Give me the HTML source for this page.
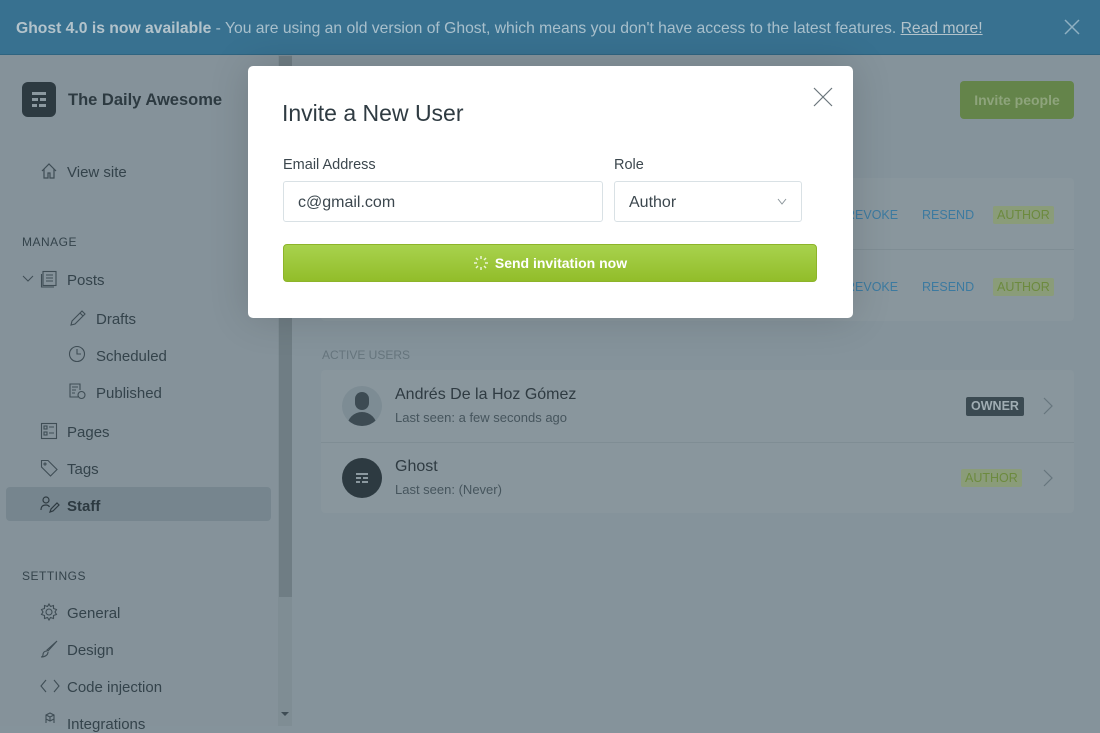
<!DOCTYPE html>
<html><head><meta charset="utf-8"><style>
*{box-sizing:border-box;margin:0;padding:0}
body{width:1100px;height:726px;overflow:hidden;font-family:"Liberation Sans",sans-serif;background:#85939b;position:relative;color:#2f3b42}
.banner{position:absolute;left:0;top:0;width:1100px;height:55px;background:#387190;color:#a9c0cc;font-size:15.7px;line-height:57px;padding-left:16px;border-bottom:1px solid #2f6480}
.banner b{color:#b3c3cb}
.banner u{color:#b3c3cb}
.bx{position:absolute;right:20px;top:19px}
.side{position:absolute;left:0;top:55px;width:278px;height:671px;background:#85929a}
.sb{position:absolute;left:278px;top:55px;width:14px;height:671px;background:#7f8d94}
.thumb{position:absolute;left:279px;top:56px;width:13px;height:541px;background:#6f7d84}
.logo{position:absolute;left:22px;top:82px;width:34px;height:35px;background:#2d3a41;border-radius:6px}
.logo i{position:absolute;height:3px;background:#8b989f}
.title{position:absolute;left:68px;top:91px;font-size:16.5px;font-weight:bold;color:#2d3a41}
.it{position:absolute;font-size:15px;color:#34434b;margin-top:1px}
.hd{position:absolute;left:22px;font-size:12px;letter-spacing:.5px;color:#34434b}
.ic{position:absolute}
.staff{position:absolute;left:6px;top:487px;width:265px;height:34px;background:#76858e;border-radius:4px}
.card{position:absolute;left:321px;width:753px;background:#89969d;border-radius:4px}
.blue{position:absolute;font-size:12.5px;color:#3c7aa0}
.tag{position:absolute;font-size:12.5px;color:#6c8a3e;background:#8a9c79;padding:2px 4px;border-radius:2px}
.modal{position:absolute;left:248px;top:66px;width:605px;height:252px;background:#fff;border-radius:5px;box-shadow:0 0 40px rgba(0,0,0,.15)}
.modal h1{position:absolute;left:34px;top:34px;font-size:23px;font-weight:normal;color:#2f3b42}
.lbl{position:absolute;top:91px;font-size:14.5px;color:#3c474e}
.inp{position:absolute;top:115px;height:41px;border:1px solid #d9e1e5;border-radius:3px;font-size:16px;color:#3c474e;line-height:41px;padding-left:14px}
.btn{position:absolute;left:35px;top:178px;width:534px;height:38px;border-radius:4px;background:linear-gradient(#a8d24d,#92bd2a);border:1px solid #8db42a;color:#fff;font-weight:bold;font-size:14px;line-height:36px;text-align:center}
</style></head><body>
<div class="banner"><b>Ghost 4.0 is now available</b> - You are using an old version of Ghost, which means you don't have access to the latest features. <u>Read more!</u>
<svg class="bx" width="16" height="16" viewBox="0 0 16 16"><path d="M1 1L15 15M15 1L1 15" stroke="#8fb0c2" stroke-width="1.5"/></svg></div>
<div class="side"></div><div class="sb"></div><div class="thumb"></div>
<div class="logo"><i style="left:10px;top:10px;width:14px"></i><i style="left:10px;top:16px;width:6px"></i><i style="left:18px;top:16px;width:6px"></i><i style="left:10px;top:22px;width:5px"></i><i style="left:17px;top:22px;width:7px"></i></div>
<div class="title">The Daily Awesome</div>
<svg class="ic" style="left:40px;top:162px" width="18" height="18" viewBox="0 0 18 18" fill="none" stroke="#3f4d55" stroke-width="1.2"><path d="M2 9L9 2L16 9M4 7V16H8V11H10V16H14V7"/></svg>
<div class="it" style="left:67px;top:163px">View site</div>
<div class="hd" style="top:235px">MANAGE</div>
<svg class="ic" style="left:22px;top:273px" width="12" height="12" viewBox="0 0 12 12"><path d="M1 3L6 8L11 3" stroke="#3f4d55" fill="none"/></svg>
<svg class="ic" style="left:40px;top:270px" width="18" height="18" viewBox="0 0 18 18" fill="none" stroke="#3f4d55" stroke-width="1.1"><rect x="3" y="1.5" width="13" height="14"/><path d="M1.5 4V17H14M6 5H13M6 8H13M6 11H13"/></svg>
<div class="it" style="left:67px;top:271px">Posts</div>
<svg class="ic" style="left:68px;top:309px" width="20" height="18" viewBox="0 0 20 18" fill="none" stroke="#3f4d55" stroke-width="1.1"><path d="M3 16L4 12L14 2L17 5L7 15ZM12 4L15 7"/></svg>
<div class="it" style="left:96px;top:310px">Drafts</div>
<svg class="ic" style="left:68px;top:345px" width="18" height="18" viewBox="0 0 18 18" fill="none" stroke="#3f4d55" stroke-width="1.1"><circle cx="9" cy="9" r="7.5"/><path d="M9 4V9H13"/></svg>
<div class="it" style="left:96px;top:347px">Scheduled</div>
<svg class="ic" style="left:68px;top:382px" width="20" height="18" viewBox="0 0 20 18" fill="none" stroke="#3f4d55" stroke-width="1.1"><path d="M10 15H2V2H12V8M4 5H10M4 8H8M4 11H7"/><circle cx="13.5" cy="13" r="3.5"/></svg>
<div class="it" style="left:96px;top:384px">Published</div>
<svg class="ic" style="left:40px;top:422px" width="18" height="18" viewBox="0 0 18 18" fill="none" stroke="#3f4d55" stroke-width="1.1"><rect x="1.5" y="1.5" width="15" height="15"/><rect x="4" y="4" width="3" height="3"/><rect x="4" y="10" width="3" height="3"/><path d="M9 5H14M9 11H14"/></svg>
<div class="it" style="left:67px;top:423px">Pages</div>
<svg class="ic" style="left:40px;top:459px" width="18" height="18" viewBox="0 0 18 18" fill="none" stroke="#3f4d55" stroke-width="1.1"><path d="M1.5 1.5H8L17 10.5L10.5 17L1.5 8Z"/><circle cx="5" cy="5" r="1"/></svg>
<div class="it" style="left:67px;top:460px">Tags</div>
<div class="staff"></div>
<svg class="ic" style="left:40px;top:496px" width="20" height="18" viewBox="0 0 20 18" fill="none" stroke="#2f3b42" stroke-width="1.2"><circle cx="6" cy="4" r="3"/><path d="M1 14C1 10 3 9 6 9C8 9 9 10 9.5 11M10 16L11 13L17 7L19 9L13 15Z"/></svg>
<div class="it" style="left:67px;top:497px;font-weight:bold;color:#2d3a41">Staff</div>
<div class="hd" style="top:569px">SETTINGS</div>
<svg class="ic" style="left:40px;top:603px" width="18" height="18" viewBox="0 0 18 18" fill="none" stroke="#3f4d55" stroke-width="1.1"><circle cx="9" cy="9" r="3"/><path d="M9 1L10.5 3.5L13.5 2.5L13.5 5.5L16.5 6.5L15 9L16.5 11.5L13.5 12.5L13.5 15.5L10.5 14.5L9 17L7.5 14.5L4.5 15.5L4.5 12.5L1.5 11.5L3 9L1.5 6.5L4.5 5.5L4.5 2.5L7.5 3.5Z"/></svg>
<div class="it" style="left:67px;top:604px">General</div>
<svg class="ic" style="left:40px;top:640px" width="18" height="18" viewBox="0 0 18 18" fill="none" stroke="#3f4d55" stroke-width="1.1"><path d="M17 1L8 11L7 10ZM7 11C4 11 3 13 3 15C3 16 2 17 1 17C5 17 8 15 8 12"/></svg>
<div class="it" style="left:67px;top:641px">Design</div>
<svg class="ic" style="left:40px;top:678px" width="20" height="16" viewBox="0 0 20 16" fill="none" stroke="#3f4d55" stroke-width="1.1"><path d="M6 2L1 8L6 14M14 2L19 8L14 14"/></svg>
<div class="it" style="left:67px;top:678px">Code injection</div>
<svg class="ic" style="left:40px;top:712px" width="20" height="14" viewBox="0 0 20 14" fill="none" stroke="#3f4d55" stroke-width="1.1"><path d="M10 1L14 3V7L10 9L6 7V3ZM6 3L10 5L14 3M10 5V9M6 7V11M14 7V11"/></svg>
<div class="it" style="left:67px;top:715px">Integrations</div>
<div style="position:absolute;left:281px;top:712px;width:0;height:0;border-left:4px solid transparent;border-right:4px solid transparent;border-top:4px solid #3f4d55"></div>
<!-- main -->
<div style="position:absolute;left:960px;top:81px;width:114px;height:38px;background:#64844a;border-radius:4px;color:#8ea47c;font-weight:bold;font-size:14px;line-height:39px;text-align:center">Invite people</div>
<div class="card" style="top:178px;height:143px"><div style="position:absolute;left:0;top:71px;width:100%;height:1px;background:#7f8d94"></div></div>
<div class="blue" style="left:846px;top:208px">REVOKE</div><div class="blue" style="left:922px;top:208px">RESEND</div><div class="tag" style="left:993px;top:206px">AUTHOR</div>
<div class="blue" style="left:846px;top:280px">REVOKE</div><div class="blue" style="left:922px;top:280px">RESEND</div><div class="tag" style="left:993px;top:278px">AUTHOR</div>
<div style="position:absolute;left:322px;top:348px;font-size:12px;color:#66757d">ACTIVE USERS</div>
<div class="card" style="top:370px;height:143px"><div style="position:absolute;left:0;top:72px;width:100%;height:1px;background:#7f8d94"></div></div>
<div style="position:absolute;left:342px;top:386px;width:40px;height:40px;border-radius:50%;background:#7d8c94;overflow:hidden"><div style="position:absolute;left:13px;top:6px;width:14px;height:18px;border-radius:7px;background:#3d4b53"></div><div style="position:absolute;left:5px;top:26px;width:30px;height:20px;border-radius:15px 15px 0 0;background:#3d4b53"></div></div>
<div style="position:absolute;left:395px;top:386px;font-size:16px;color:#2f3b42">Andrés De la Hoz Gómez</div>
<div style="position:absolute;left:395px;top:410px;font-size:13px;color:#46555d">Last seen: a few seconds ago</div>
<div style="position:absolute;left:966px;top:397px;width:58px;height:19px;background:#3b4a52;color:#a0adb3;font-size:12.5px;font-weight:bold;line-height:19px;text-align:center;border-radius:2px">OWNER</div>
<svg class="ic" style="left:1042px;top:396px" width="12" height="20" viewBox="0 0 12 20"><path d="M2 2L10 10L2 18" stroke="#66757d" fill="none" stroke-width="1.2"/></svg>
<div style="position:absolute;left:342px;top:458px;width:40px;height:40px;border-radius:50%;background:#2d3a41"><i style="position:absolute;left:14px;top:15px;width:12px;height:2px;background:#8b989f"></i><i style="position:absolute;left:14px;top:19px;width:5px;height:2px;background:#8b989f"></i><i style="position:absolute;left:21px;top:19px;width:5px;height:2px;background:#8b989f"></i><i style="position:absolute;left:14px;top:23px;width:4px;height:2px;background:#8b989f"></i><i style="position:absolute;left:20px;top:23px;width:6px;height:2px;background:#8b989f"></i></div>
<div style="position:absolute;left:395px;top:458px;font-size:16px;color:#2f3b42">Ghost</div>
<div style="position:absolute;left:395px;top:482px;font-size:13px;color:#46555d">Last seen: (Never)</div>
<div class="tag" style="left:961px;top:469px">AUTHOR</div>
<svg class="ic" style="left:1042px;top:468px" width="12" height="20" viewBox="0 0 12 20"><path d="M2 2L10 10L2 18" stroke="#66757d" fill="none" stroke-width="1.2"/></svg>
<!-- modal -->
<div class="modal">
<h1>Invite a New User</h1>
<svg style="position:absolute;left:565px;top:21px" width="20" height="20" viewBox="0 0 20 20"><path d="M1 1L19 19M19 1L1 19" stroke="#6a757b" stroke-width="1.2"/></svg>
<div class="lbl" style="left:35px">Email Address</div>
<div class="lbl" style="left:366px">Role</div>
<div class="inp" style="left:35px;width:320px">c@gmail.com</div>
<div class="inp" style="left:366px;width:188px">Author<svg style="position:absolute;right:14px;top:16px" width="10" height="8" viewBox="0 0 10 8"><path d="M1 1L5 6L9 1" stroke="#8a949a" fill="none"/></svg></div>
<div class="btn"><svg style="vertical-align:-3px;margin-right:6px" width="16" height="16" viewBox="0 0 16 16" stroke="#fff" stroke-width="1.5"><path d="M8 1V4M8 12V15M1 8H4M12 8H15M3 3L5 5M11 11L13 13M3 13L5 11M11 5L13 3" opacity=".8"/></svg>Send invitation now</div>
</div>
</body></html>
